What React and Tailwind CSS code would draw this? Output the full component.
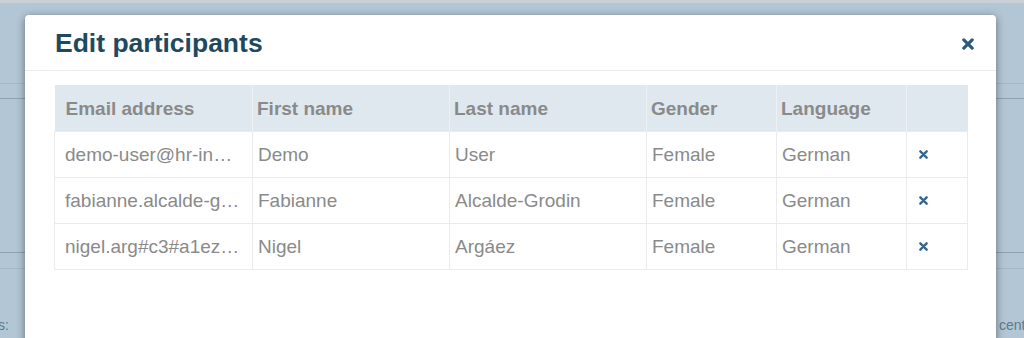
const rows = [
  { email: 'demo-user@hr-innovation.com', first: 'Demo', last: 'User', gender: 'Female', lang: 'German' },
  { email: 'fabianne.alcalde-grodin@example.com', first: 'Fabianne', last: 'Alcalde-Grodin', gender: 'Female', lang: 'German' },
  { email: 'nigel.arg#c3#a1ez@example.com', first: 'Nigel', last: 'Argáez', gender: 'Female', lang: 'German' },
]

const SmallX = ({ size = 9 }) => (
  <svg width={size} height={size} viewBox="0 0 10 10" aria-hidden="true">
    <path d="M1.5 1.5 L8.5 8.5 M8.5 1.5 L1.5 8.5" stroke="currentColor" strokeWidth="2.6" strokeLinecap="round" />
  </svg>
)

const App = () => {
  return (
    <div className="relative h-[338px] w-[1024px] overflow-hidden bg-[#b3c6d5] font-['Liberation_Sans',Arial,sans-serif]">
      {/* page behind the dialog */}
      <div className="h-[3px] bg-[#c9d0d6]" />
      <div className="h-[80px]" />
      <div className="h-[15px] border-t border-[#a4b8c8]" />
      <div className="h-[154px] border-t border-[#8da2b3]" />
      <div className="h-[16px] border-t border-[#8da2b3]" />
      <div className="flex h-[70px] items-end justify-between border-t border-[#a4b8c8] pb-[2px] text-[14px] text-[#5d7a91]">
        <span className="-ml-[2px]">s:</span>
        <span className="-mr-[6px]">centr</span>
      </div>

      {/* dialog */}
      <div className="absolute left-[25px] top-[15px] h-[340px] w-[971px] rounded-[4px] bg-white shadow-[0_2px_8px_rgba(0,0,0,0.45)]">
        <div className="flex h-[56px] items-center justify-between border-b border-[#e9ecef] pl-[30px] pr-[22px] pt-[2px]">
          <h2 className="text-[26.5px] font-bold text-[#1d4a5e]">Edit participants</h2>
          <button type="button" className="text-[#2d5a7b]">
            <SmallX size={12} />
          </button>
        </div>

        <div className="pl-[29px] pt-[14px]">
          <table className="w-[913px] table-fixed border-collapse text-[19px] text-[#8a8a8a]">
            <colgroup>
              <col className="w-[198px]" />
              <col className="w-[197px]" />
              <col className="w-[197px]" />
              <col className="w-[130px]" />
              <col className="w-[130px]" />
              <col className="w-[61px]" />
            </colgroup>
            <thead>
              <tr className="h-[46px] bg-[#dfe8ef] text-left">
                <th className="border-r border-[#eef0f2] pl-[11px] pt-[3px] font-bold">Email address</th>
                <th className="border-r border-[#eef0f2] pl-[4px] pt-[3px] font-bold">First name</th>
                <th className="border-r border-[#eef0f2] pl-[4px] pt-[3px] font-bold">Last name</th>
                <th className="border-r border-[#eef0f2] pl-[4px] pt-[3px] font-bold">Gender</th>
                <th className="border-r border-[#eef0f2] pl-[4px] pt-[3px] font-bold">Language</th>
                <th />
              </tr>
            </thead>
            <tbody>
              {rows.map((r) => (
                <tr key={r.email} className="h-[46px]">
                  <td className="truncate border border-[#ebebeb] pl-[10px] pr-[10px] pt-[3px]">{r.email}</td>
                  <td className="border border-[#ebebeb] pl-[5px] pt-[3px]">{r.first}</td>
                  <td className="border border-[#ebebeb] pl-[5px] pt-[3px]">{r.last}</td>
                  <td className="border border-[#ebebeb] pl-[5px] pt-[3px]">{r.gender}</td>
                  <td className="border border-[#ebebeb] pl-[5px] pt-[3px]">{r.lang}</td>
                  <td className="border border-[#ebebeb] pl-[12px] text-[#336791]">
                    <SmallX size={9} />
                  </td>
                </tr>
              ))}
            </tbody>
          </table>
        </div>
      </div>
    </div>
  )
}

export default App
